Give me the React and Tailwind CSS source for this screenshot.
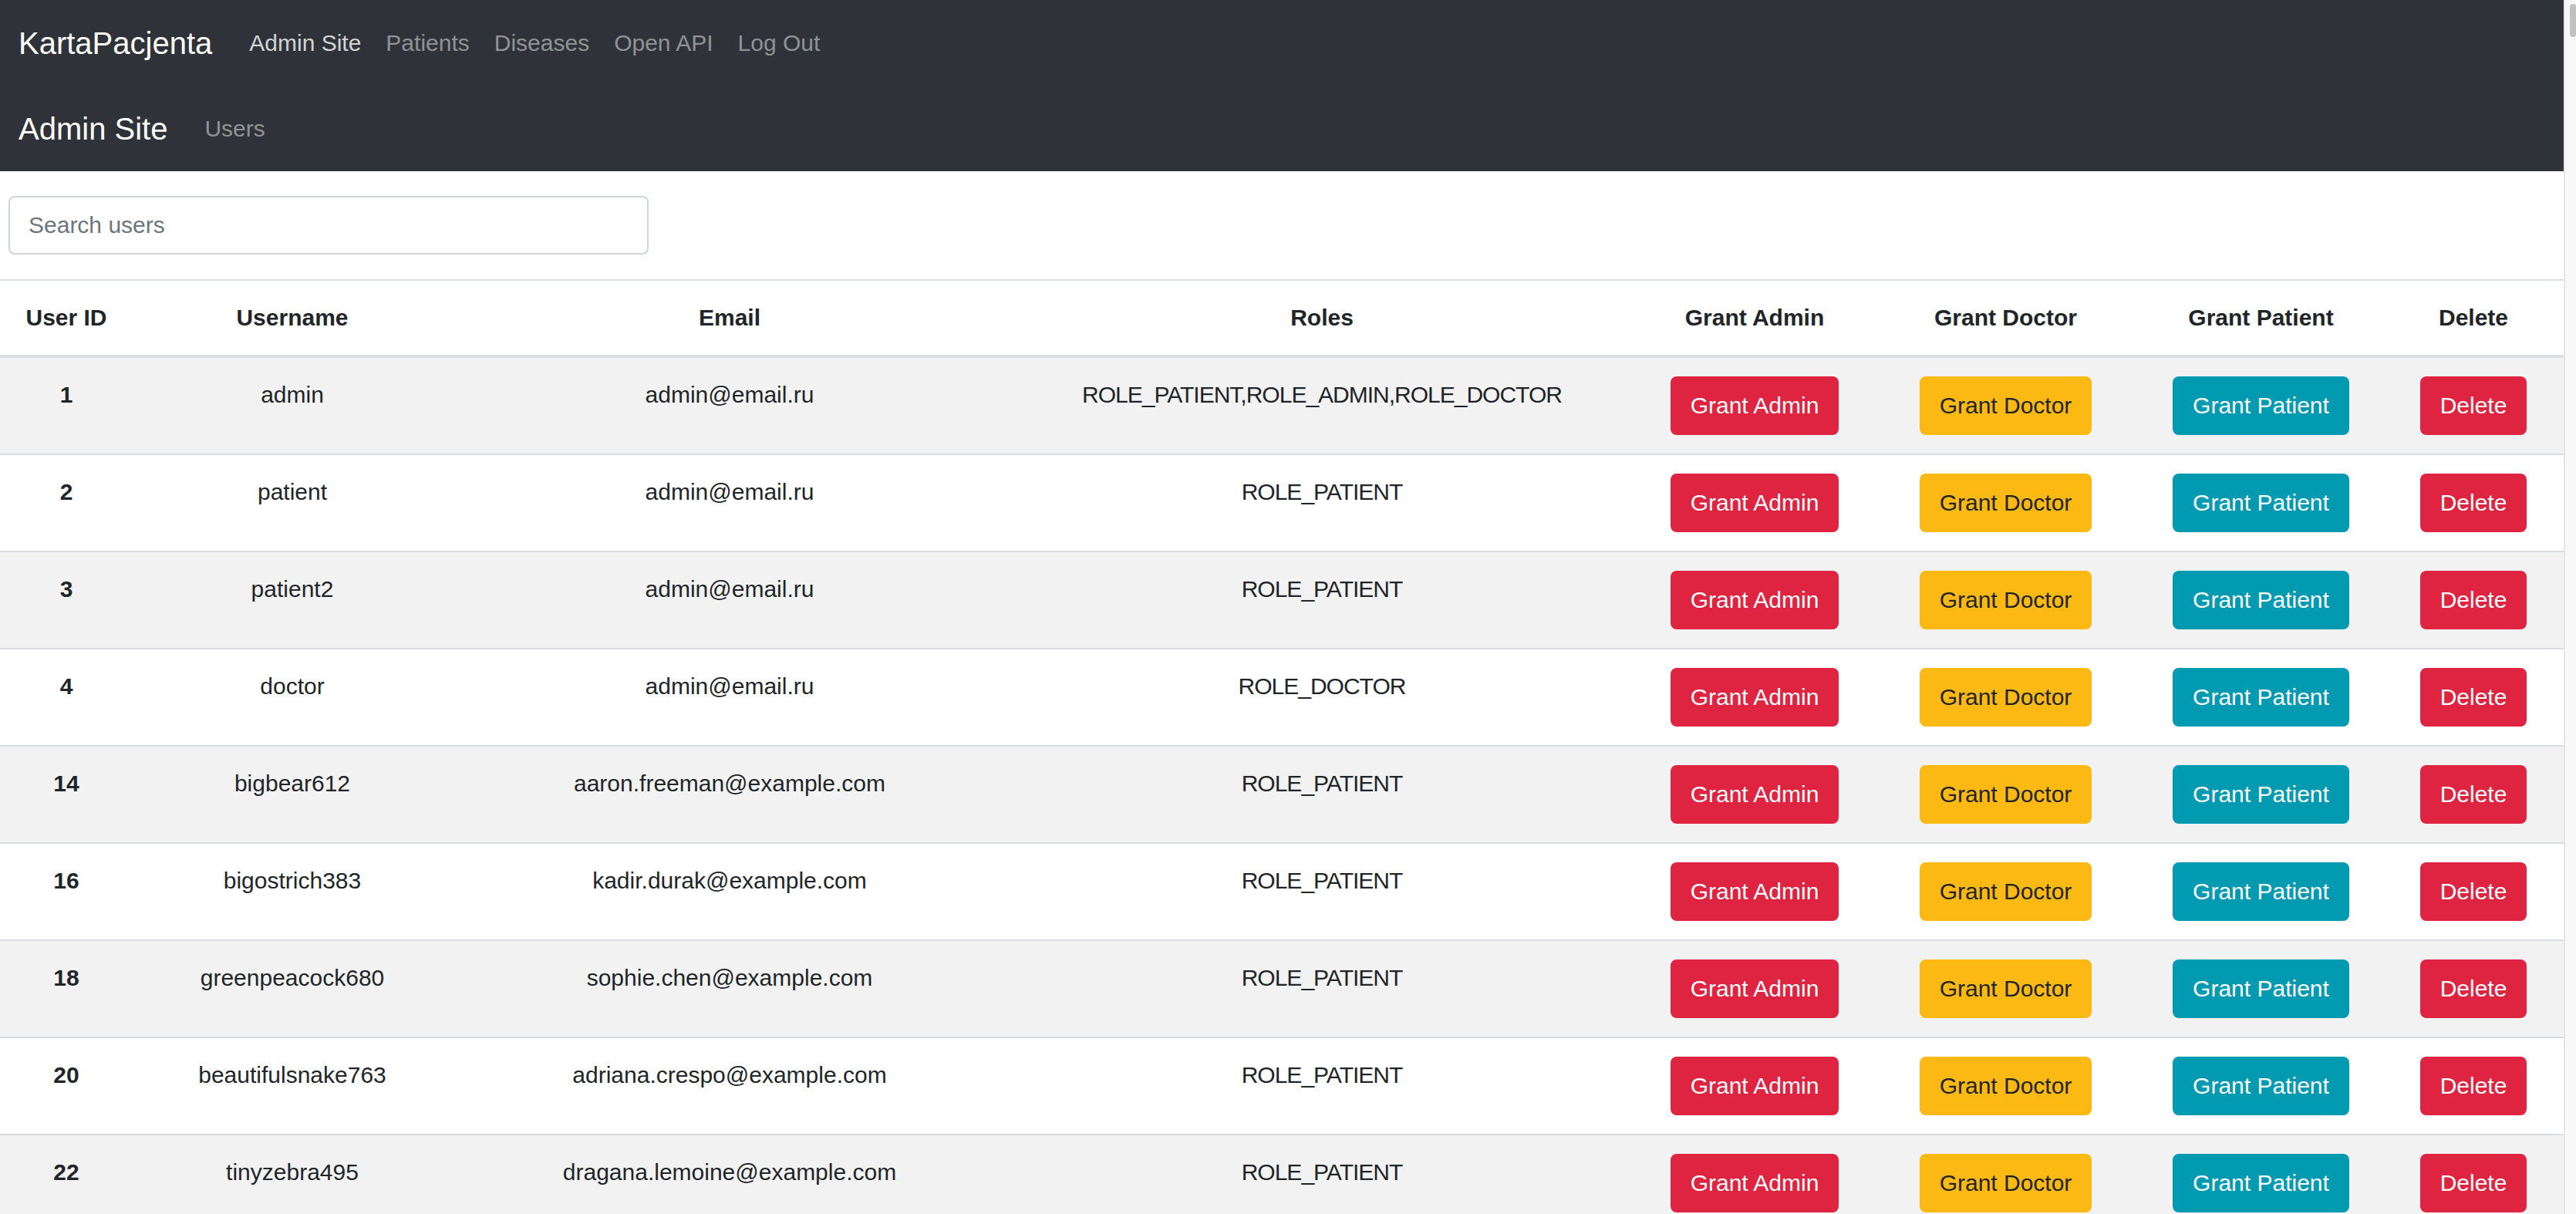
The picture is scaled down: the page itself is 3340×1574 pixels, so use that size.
import { useState } from "react";

const users = [
  { id: 1, username: "admin", email: "admin@email.ru", roles: "ROLE_PATIENT,ROLE_ADMIN,ROLE_DOCTOR" },
  { id: 2, username: "patient", email: "admin@email.ru", roles: "ROLE_PATIENT" },
  { id: 3, username: "patient2", email: "admin@email.ru", roles: "ROLE_PATIENT" },
  { id: 4, username: "doctor", email: "admin@email.ru", roles: "ROLE_DOCTOR" },
  { id: 14, username: "bigbear612", email: "aaron.freeman@example.com", roles: "ROLE_PATIENT" },
  { id: 16, username: "bigostrich383", email: "kadir.durak@example.com", roles: "ROLE_PATIENT" },
  { id: 18, username: "greenpeacock680", email: "sophie.chen@example.com", roles: "ROLE_PATIENT" },
  { id: 20, username: "beautifulsnake763", email: "adriana.crespo@example.com", roles: "ROLE_PATIENT" },
  { id: 22, username: "tinyzebra495", email: "dragana.lemoine@example.com", roles: "ROLE_PATIENT" },
];

const navLinks = ["Admin Site", "Patients", "Diseases", "Open API", "Log Out"];

function App() {
  const [search, setSearch] = useState("");

  const filtered = users.filter((u) =>
    u.username.toLowerCase().includes(search.toLowerCase())
  );

  return (
    <div
      className="flex h-[1574px] overflow-hidden bg-white text-[#212529]"
      style={{ fontFamily: '"Liberation Sans", Arial, sans-serif' }}
    >
      <div className="w-[3324px] shrink-0">
        {/* top navbar */}
        <nav className="bg-[#2f3339]">
          <div className="flex h-[111px] items-center pl-[24px]">
            <span className="mr-[32px] text-[40px] leading-[60px] text-white">KartaPacjenta</span>
            {navLinks.map((link, i) => (
              <a
                key={link}
                className={`px-[16px] text-[30px] leading-[48px] ${
                  i === 0 ? "text-[#d2d3d4]" : "text-[#909396]"
                }`}
              >
                {link}
              </a>
            ))}
          </div>

          {/* admin sub navbar */}
          <div className="flex h-[111px] items-center pl-[24px]">
            <span className="mr-[32px] text-[40px] leading-[60px] text-white">Admin Site</span>
            <a className="px-[16px] text-[30px] leading-[48px] text-[#909396]">Users</a>
          </div>
        </nav>

        {/* search */}
        <div className="py-[32px] pl-[11px]">
          <input
            placeholder="Search users"
            className="h-[76px] w-[830px] rounded-[8px] border-2 border-[#ced4da] px-[24px] text-[30px] text-[#495057] outline-none placeholder:text-[#6c757d]"
            value={search}
            onChange={(e) => setSearch(e.target.value)}
          />
        </div>

        {/* users table */}
        <table className="w-full table-fixed border-collapse text-center text-[30px] leading-[48px]">
          <thead>
            <tr className="border-t-2 border-b-4 border-[#dadee2]">
              <th className="w-[172px] p-[24px] font-bold">User ID</th>
              <th className="w-[414px] p-[24px] font-bold">Username</th>
              <th className="w-[720px] p-[24px] font-bold">Email</th>
              <th className="w-[816px] p-[24px] font-bold">Roles</th>
              <th className="w-[306px] p-[24px] font-bold">Grant Admin</th>
              <th className="w-[345px] p-[24px] font-bold">Grant Doctor</th>
              <th className="w-[317px] p-[24px] font-bold">Grant Patient</th>
              <th className="w-[234px] p-[24px] font-bold">Delete</th>
            </tr>
          </thead>
          <tbody>
            {filtered.map((u, i) => (
              <tr
                key={u.id}
                className={`border-t-2 border-[#dadee2] align-top ${
                  i % 2 === 0 ? "bg-[#f2f2f2]" : "bg-white"
                }`}
              >
                <td className="p-[24px] font-bold">{u.id}</td>
                <td className="p-[24px]">{u.username}</td>
                <td className="p-[24px]">{u.email}</td>
                <td className="p-[24px] tracking-[-1px]">{u.roles}</td>
                <td className="p-[24px]">
                  <button className="h-[76px] rounded-[8px] bg-[#de2441] px-[26px] text-white">
                    Grant Admin
                  </button>
                </td>
                <td className="p-[24px]">
                  <button className="h-[76px] rounded-[8px] bg-[#fdb913] px-[26px] text-[#212529]">
                    Grant Doctor
                  </button>
                </td>
                <td className="p-[24px]">
                  <button className="h-[76px] rounded-[8px] bg-[#029ab1] px-[26px] text-white">
                    Grant Patient
                  </button>
                </td>
                <td className="p-[24px]">
                  <button className="h-[76px] rounded-[8px] bg-[#de2441] px-[26px] text-white">
                    Delete
                  </button>
                </td>
              </tr>
            ))}
          </tbody>
        </table>
      </div>

      {/* scrollbar track */}
      <div className="flex-1 border-l-2 border-[#e6e6e6] bg-[#f8f8f8] pt-[5px] pl-[6px]">
        <div className="h-[43px] w-[8px] rounded-full bg-[#c1c1c1]" />
      </div>
    </div>
  );
}

export default App;
